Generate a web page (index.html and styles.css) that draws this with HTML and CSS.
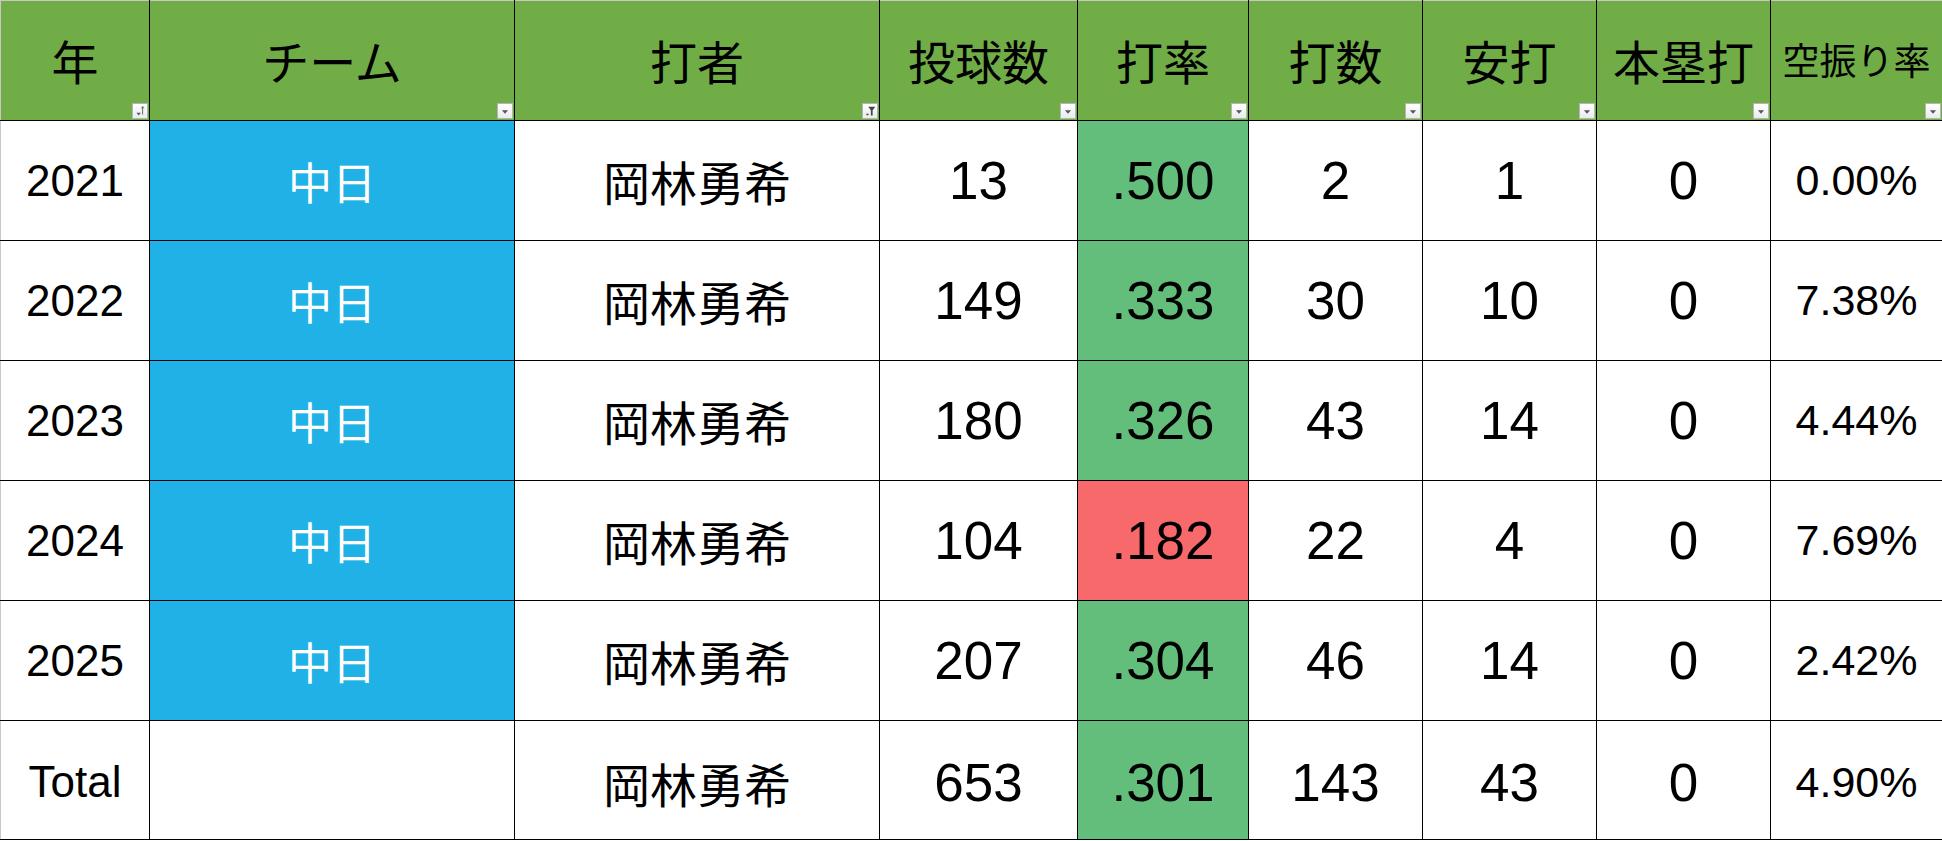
FILE: index.html
```html
<!DOCTYPE html>
<html lang="ja">
<head>
<meta charset="utf-8">
<title>岡林勇希 成績</title>
<link rel="stylesheet" href="styles.css">
</head>
<body>
<table class="sheet">
  <colgroup>
    <col class="c-year"><col class="c-team"><col class="c-name"><col class="c-pitch"><col class="c-avg"><col class="c-ab"><col class="c-hit"><col class="c-hr"><col class="c-whiff">
  </colgroup>
  <thead>
    <tr class="head">
      <th>年<span class="fbtn"><svg viewBox="0 0 16 16" width="16" height="16"><path d="M4 10h5l-2.5 3z" fill="#555"/><path d="M11 3v9M9.5 5L11 3l1.5 2" stroke="#555" stroke-width="1" fill="none"/></svg></span></th>
      <th>チーム<span class="fbtn"><svg viewBox="0 0 16 16" width="16" height="16"><path d="M4.5 7h7l-3.5 4z" fill="#555"/></svg></span></th>
      <th>打者<span class="fbtn"><svg viewBox="0 0 16 16" width="16" height="16"><path d="M3 11h4l-2 2.5z" fill="#555"/><path d="M6 3h8l-3 4v6h-2v-6z" fill="#444"/></svg></span></th>
      <th>投球数<span class="fbtn"><svg viewBox="0 0 16 16" width="16" height="16"><path d="M4.5 7h7l-3.5 4z" fill="#555"/></svg></span></th>
      <th>打率<span class="fbtn"><svg viewBox="0 0 16 16" width="16" height="16"><path d="M4.5 7h7l-3.5 4z" fill="#555"/></svg></span></th>
      <th>打数<span class="fbtn"><svg viewBox="0 0 16 16" width="16" height="16"><path d="M4.5 7h7l-3.5 4z" fill="#555"/></svg></span></th>
      <th>安打<span class="fbtn"><svg viewBox="0 0 16 16" width="16" height="16"><path d="M4.5 7h7l-3.5 4z" fill="#555"/></svg></span></th>
      <th>本塁打<span class="fbtn"><svg viewBox="0 0 16 16" width="16" height="16"><path d="M4.5 7h7l-3.5 4z" fill="#555"/></svg></span></th>
      <th class="small">空振り率<span class="fbtn"><svg viewBox="0 0 16 16" width="16" height="16"><path d="M4.5 7h7l-3.5 4z" fill="#555"/></svg></span></th>
    </tr>
  </thead>
  <tbody>
    <tr><td class="year">2021</td><td class="team">中日</td><td class="name">岡林勇希</td><td class="num">13</td><td class="num good">.500</td><td class="num">2</td><td class="num">1</td><td class="num">0</td><td class="pct">0.00%</td></tr>
    <tr><td class="year">2022</td><td class="team">中日</td><td class="name">岡林勇希</td><td class="num">149</td><td class="num good">.333</td><td class="num">30</td><td class="num">10</td><td class="num">0</td><td class="pct">7.38%</td></tr>
    <tr><td class="year">2023</td><td class="team">中日</td><td class="name">岡林勇希</td><td class="num">180</td><td class="num good">.326</td><td class="num">43</td><td class="num">14</td><td class="num">0</td><td class="pct">4.44%</td></tr>
    <tr><td class="year">2024</td><td class="team">中日</td><td class="name">岡林勇希</td><td class="num">104</td><td class="num bad">.182</td><td class="num">22</td><td class="num">4</td><td class="num">0</td><td class="pct">7.69%</td></tr>
    <tr><td class="year">2025</td><td class="team">中日</td><td class="name">岡林勇希</td><td class="num">207</td><td class="num good">.304</td><td class="num">46</td><td class="num">14</td><td class="num">0</td><td class="pct">2.42%</td></tr>
    <tr class="total"><td class="year">Total</td><td class="blank"></td><td class="name">岡林勇希</td><td class="num">653</td><td class="num good">.301</td><td class="num">143</td><td class="num">43</td><td class="num">0</td><td class="pct">4.90%</td></tr>
  </tbody>
</table>
</body>
</html>
```
FILE: styles.css
```css
html, body {
  margin: 0;
  padding: 0;
  background: #ffffff;
}

.sheet {
  width: 1942px;
  border-collapse: collapse;
  table-layout: fixed;
  font-family: "Liberation Sans", "Noto Sans CJK JP", sans-serif;
  color: #000;
  border-top: 1px solid #c8c8c8;
  border-left: 1px solid #c8c8c8;
}

.c-year { width: 149px; }
.c-team { width: 365px; }
.c-name { width: 365px; }
.c-pitch { width: 198px; }
.c-avg { width: 171px; }
.c-ab { width: 174px; }
.c-hit { width: 174px; }
.c-hr { width: 174px; }
.c-whiff { width: 172px; }

.sheet th,
.sheet td {
  border: 1px solid #000;
  padding: 0;
  text-align: center;
  vertical-align: middle;
  line-height: 1;
  white-space: nowrap;
  box-sizing: border-box;
}

.sheet tr:first-child th { border-top-color: #c8c8c8; }
.sheet th:first-child, .sheet td:first-child { border-left-color: #c8c8c8; }

.head th {
  position: relative;
  height: 120px;
  background: #70ad47;
  font-family: "Noto Sans CJK JP", sans-serif;
  font-weight: 400;
  font-size: 47px;
  padding-bottom: 2px;
}

.head th.small { font-size: 37px; }

.fbtn {
  position: absolute;
  right: 1px;
  bottom: 1px;
  width: 16px;
  height: 16px;
  box-sizing: border-box;
  border: 1px solid #b5b5b5;
  background: linear-gradient(#ffffff, #e9ebee);
  display: flex;
}

.fbtn svg { display: block; width: 14px; height: 14px; }

tbody td {
  height: 120px;
  padding-top: 8px;
}
tbody tr.total td { height: 119px; padding-top: 4px; }

.year { font-size: 44px; }
.team {
  background: #20b1e7;
  color: #ffffff;
  font-family: "Noto Sans CJK JP", sans-serif;
  font-size: 44px;
}
.name {
  font-family: "Noto Sans CJK JP", sans-serif;
  font-size: 47px;
}
.num { font-size: 53px; }
.pct { font-size: 43px; }
.good { background: #63be7b; }
.bad { background: #f8696b; }
```
